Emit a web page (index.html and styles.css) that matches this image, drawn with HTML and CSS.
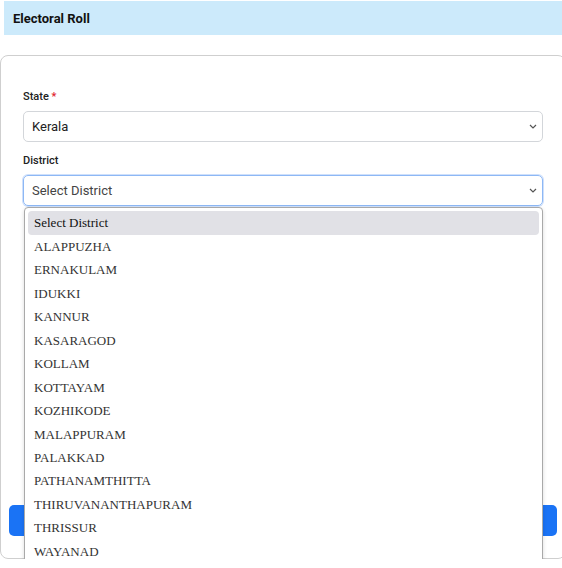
FILE: index.html
```html
<!DOCTYPE html>
<html>
<head>
<meta charset="utf-8">
<link rel="stylesheet" href="styles.css">
</head>
<body>
<div class="page-head">Electoral Roll</div>
<div class="card">
  <div class="field">
    <div class="label">State <span class="req">*</span></div>
    <div class="select">
      <span>Kerala</span>
      <svg class="chev" width="8" height="5" viewBox="0 0 8 5"><path d="M1 1l3 3 3-3" fill="none" stroke="#555" stroke-width="1.2"/></svg>
    </div>
  </div>
  <div class="field">
    <div class="label">District</div>
    <div class="select-wrap">
      <div class="select focus">
        <span>Select District</span>
        <svg class="chev" width="8" height="5" viewBox="0 0 8 5"><path d="M1 1l3 3 3-3" fill="none" stroke="#555" stroke-width="1.2"/></svg>
      </div>
      <div class="dropdown">
        <div class="opt sel">Select District</div>
        <div class="opt">ALAPPUZHA</div>
        <div class="opt">ERNAKULAM</div>
        <div class="opt">IDUKKI</div>
        <div class="opt">KANNUR</div>
        <div class="opt">KASARAGOD</div>
        <div class="opt">KOLLAM</div>
        <div class="opt">KOTTAYAM</div>
        <div class="opt">KOZHIKODE</div>
        <div class="opt">MALAPPURAM</div>
        <div class="opt">PALAKKAD</div>
        <div class="opt">PATHANAMTHITTA</div>
        <div class="opt">THIRUVANANTHAPURAM</div>
        <div class="opt">THRISSUR</div>
        <div class="opt">WAYANAD</div>
      </div>
    </div>
  </div>
  <div class="btn">Submit</div>
</div>
</body>
</html>
```
FILE: styles.css
```css
html, body {
  margin: 0;
  padding: 0;
  background: #fff;
  overflow: hidden;
}
body {
  font-family: Roboto, "Liberation Sans", sans-serif;
  color: #212529;
}
.page-head {
  margin: 1px 0 0 4px;
  height: 34px;
  background: #cceafb;
  font-size: 13px;
  font-weight: 700;
  color: #111;
  display: flex;
  align-items: center;
  padding-left: 9px;
}
.card {
  margin: 20px -4px 0 0;
  border: 1px solid #cfcfcf;
  border-radius: 8px;
  padding: 34px 22px 22px 22px;
  position: relative;
}
.field {
  display: flex;
  flex-direction: column;
}
.field + .field {
  margin-top: 12px;
}
.label {
  font-size: 11px;
  font-weight: 500;
  line-height: 14px;
  color: #222;
  margin-bottom: 7px;
}
.req {
  color: #e0212b;
}
.select {
  height: 29px;
  border: 1px solid #d3d6da;
  border-radius: 5px;
  display: flex;
  align-items: center;
  justify-content: space-between;
  padding: 0 5px 0 8px;
  font-size: 13px;
  color: #222;
}
.select.focus {
  border-color: #8db8f5;
  box-shadow: 0 0 0 1px #cfe0fb;
  color: #444;
}
.chev {
  display: block;
}
.select-wrap {
  position: relative;
}
.dropdown {
  position: absolute;
  top: 32px;
  left: 1px;
  right: 0;
  height: 380px;
  background: #fff;
  border: 1px solid #a9a9a9;
  border-radius: 4px;
  box-shadow: 0 2px 4px rgba(0,0,0,0.15);
  padding: 3px;
  z-index: 5;
}
.opt {
  height: 23.45px;
  line-height: 23.45px;
  padding-left: 6px;
  font-family: "Liberation Serif", "Times New Roman", serif;
  font-size: 13px;
  color: #333;
  border-radius: 4px;
}
.opt.sel {
  height: 24px;
  line-height: 24px;
  background: #e1e1e6;
  color: #111;
}
.btn {
  margin: 299px -14px 0 -14px;
  height: 31px;
  border-radius: 5px;
  background: #1a73f5;
  color: #fff;
  font-size: 13px;
  display: flex;
  align-items: center;
  justify-content: center;
}
```
